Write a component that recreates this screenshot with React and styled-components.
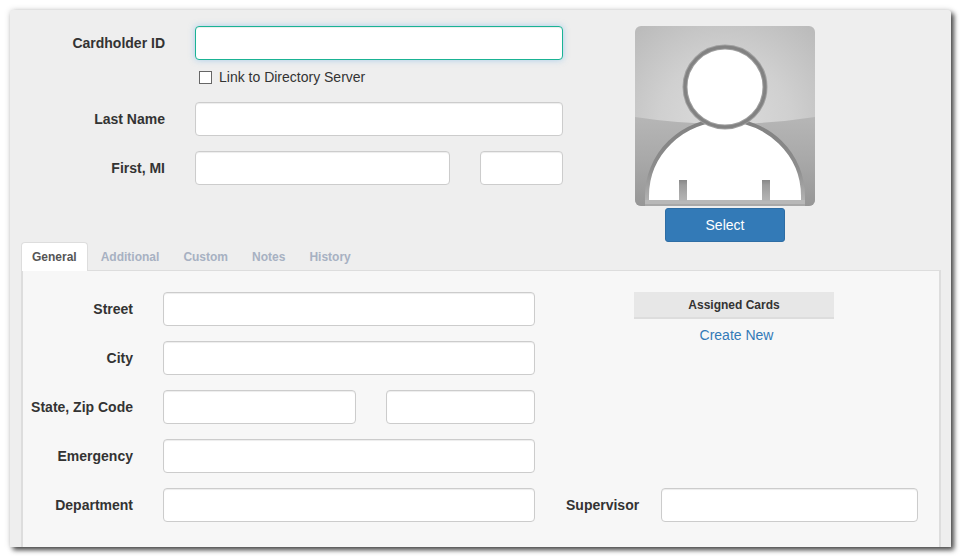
import React, { useState } from 'react';
import styled, { createGlobalStyle } from 'styled-components';

const GlobalStyle = createGlobalStyle`
  * {
    box-sizing: border-box;
  }

  body {
    margin: 0;
    background: #fff;
    color: #333;
    font-family: "Liberation Sans", Arial, sans-serif;
    font-size: 14px;
    line-height: 20px;
  }
`;

const Panel = styled.form`
  margin: 10px 11px 11px 10px;
  padding: 16px 10px 0 11px;
  background: #eee;
  border-radius: 3px 3px 0 0;
  box-shadow: 3px 3px 5px rgba(0, 0, 0, 0.7), 0 0 6px rgba(0, 0, 0, 0.15);
`;

const Summary = styled.section`
  display: grid;
  grid-template-columns: minmax(0, 1fr) 180px;
  column-gap: 72px;
  padding-right: 126px;
`;

const Fields = styled.div`
  display: flex;
  flex-direction: column;
  gap: 15px;
`;

const Row = styled.div`
  display: grid;
  grid-template-columns: ${(props) => props.$labelWidth} minmax(0, 1fr);
  column-gap: ${(props) => props.$gap || '30px'};
  align-items: center;
`;

const Label = styled.label`
  font-weight: bold;
  text-align: right;
  white-space: nowrap;
`;

const Split = styled.div`
  display: grid;
  grid-template-columns: ${(props) => props.$columns};
  column-gap: 30px;
`;

const TextInput = styled.input`
  width: 100%;
  height: 34px;
  padding: 6px 12px;
  border: 1px solid ${(props) => (props.$active ? '#1ab394' : '#ccc')};
  border-radius: 4px;
  background: #fff;
  box-shadow: inset 0 1px 1px rgba(0, 0, 0, 0.075)${(props) => (props.$active ? ', 0 0 6px rgba(102, 175, 233, 0.5)' : '')};
  color: #555;
  font: inherit;
  outline: none;
`;

const CheckRow = styled.div`
  display: flex;
  align-items: center;
  gap: 7px;
  margin: -8px 0 0 178px;
`;

const Checkbox = styled.input`
  appearance: none;
  width: 13px;
  height: 13px;
  margin: 0;
  border: 1px solid #666;
  background: ${(props) => (props.checked ? '#1ab394' : '#fff')};
`;

const Photo = styled.div`
  display: flex;
  flex-direction: column;
  align-items: center;
  gap: 2px;
`;

const Avatar = styled.svg`
  display: block;
  width: 180px;
  height: 180px;
  border-radius: 6px;
`;

const SelectButton = styled.button`
  width: 120px;
  height: 34px;
  border: 1px solid #2e6da4;
  border-radius: 3px;
  background: #337ab7;
  color: #fff;
  font: inherit;
  cursor: pointer;
`;

const TabList = styled.div`
  display: flex;
  gap: 2px;
  border-bottom: 1px solid #ddd;
`;

const Tab = styled.button`
  height: 29px;
  margin-bottom: -1px;
  padding: 0 10px;
  border: 1px solid ${(props) => (props.$active ? '#ddd' : 'transparent')};
  border-bottom: 0;
  border-radius: 4px 4px 0 0;
  background: ${(props) => (props.$active ? '#fff' : 'transparent')};
  color: ${(props) => (props.$active ? '#555' : '#a7b1c2')};
  font: bold 12px "Liberation Sans", Arial, sans-serif;
  cursor: pointer;
`;

const TabPane = styled.section`
  display: grid;
  grid-template-columns: minmax(0, 512fr) minmax(0, 352fr);
  column-gap: 31px;
  padding: 21px 21px 25px 0;
  border: solid #ddd;
  border-width: 0 2px;
  background: #f7f7f7;
`;

const SideColumn = styled.div`
  display: flex;
  flex-direction: column;
  justify-content: space-between;
`;

const Cards = styled.div`
  display: flex;
  flex-direction: column;
  align-items: center;
  gap: 6px;
  padding-right: 16px;
`;

const CardsHeading = styled.h2`
  width: 200px;
  margin: 0;
  padding: 5px 0 4px;
  border-bottom: 2px solid #ddd;
  background: #e7e7e7;
  font-size: 12px;
  line-height: 16px;
  text-align: center;
`;

const CardLink = styled.a`
  padding-left: 5px;
  color: #337ab7;
  text-decoration: none;
`;

const tabs = ['General', 'Additional', 'Custom', 'Notes', 'History'];

const PersonPlaceholder = () => (
  <Avatar viewBox="0 0 180 180" role="img" aria-label="No photo">
    <defs>
      <radialGradient id="glow" gradientUnits="userSpaceOnUse" cx="90" cy="96" r="130">
        <stop offset="0" stopColor="#dcdcdc" />
        <stop offset="0.5" stopColor="#d0d0d0" />
        <stop offset="0.75" stopColor="#c5c5c5" />
        <stop offset="1" stopColor="#bababa" />
      </radialGradient>
      <linearGradient id="floor" x1="0" y1="0" x2="0" y2="1">
        <stop offset="0" stopColor="#b6b6b6" />
        <stop offset="0.5" stopColor="#a8a8a8" />
        <stop offset="1" stopColor="#969696" />
      </linearGradient>
      <linearGradient id="outline" gradientUnits="userSpaceOnUse" x1="0" y1="96" x2="0" y2="180">
        <stop offset="0" stopColor="#828282" />
        <stop offset="0.55" stopColor="#8c8c8c" />
        <stop offset="1" stopColor="#b8b8b8" />
      </linearGradient>
      <linearGradient id="arm" gradientUnits="userSpaceOnUse" x1="0" y1="154" x2="0" y2="174">
        <stop offset="0" stopColor="#888" />
        <stop offset="0.25" stopColor="#9c9c9c" />
        <stop offset="1" stopColor="#b4b4b4" />
      </linearGradient>
    </defs>
    <rect width="180" height="180" fill="url(#glow)" />
    <path d="M0 91 Q90 105 180 91 V180 H0 Z" fill="url(#floor)" />
    <path d="M10 180 V170 H170 V180 Z" fill="#b8b8b8" />
    <path
      d="M12 176 V170 A78 76 0 0 1 168 170 V176"
      fill="#fff"
      stroke="url(#outline)"
      strokeWidth="4"
    />
    <path d="M10 174 H170 V178 H10 Z" fill="#b8b8b8" />
    <path d="M10 178 H170 V180 H10 Z" fill="#a8a8a8" />
    <path d="M44 154 H52 V175 H44 Z M127 154 H135 V175 H127 Z" fill="url(#arm)" />
    <circle cx="90" cy="61" r="40" fill="#fff" stroke="#a0a0a0" strokeWidth="5" />
    <circle cx="90" cy="61" r="40" fill="none" stroke="#828282" strokeWidth="3" />
  </Avatar>
);

const Field = ({ id, label, labelWidth, gap, active }) => (
  <Row $labelWidth={labelWidth} $gap={gap}>
    <Label htmlFor={id}>{label}</Label>
    <TextInput id={id} type="text" $active={active} />
  </Row>
);

const App = () => {
  const [activeTab, setActiveTab] = useState('General');
  const [linked, setLinked] = useState(false);

  return (
    <>
      <GlobalStyle />
      <Panel onSubmit={(e) => e.preventDefault()}>
        <Summary>
          <Fields>
            <Field id="cardholderId" label="Cardholder ID" labelWidth="144px" active />
            <CheckRow>
              <Checkbox
                id="linkDirectory"
                type="checkbox"
                checked={linked}
                onChange={(e) => setLinked(e.target.checked)}
              />
              <label htmlFor="linkDirectory">Link to Directory Server</label>
            </CheckRow>
            <Field id="lastName" label="Last Name" labelWidth="144px" />
            <Row $labelWidth="144px">
              <Label htmlFor="firstName">First, MI</Label>
              <Split $columns="255fr 83fr">
                <TextInput id="firstName" type="text" />
                <TextInput id="middleInitial" type="text" aria-label="MI" />
              </Split>
            </Row>
          </Fields>
          <Photo>
            <PersonPlaceholder />
            <SelectButton type="button">Select</SelectButton>
          </Photo>
        </Summary>

        <TabList role="tablist">
          {tabs.map((tab) => (
            <Tab
              key={tab}
              type="button"
              role="tab"
              aria-selected={tab === activeTab}
              $active={tab === activeTab}
              onClick={() => setActiveTab(tab)}
            >
              {tab}
            </Tab>
          ))}
        </TabList>

        <TabPane role="tabpanel">
          <Fields>
            <Field id="street" label="Street" labelWidth="110px" />
            <Field id="city" label="City" labelWidth="110px" />
            <Row $labelWidth="110px">
              <Label htmlFor="state">State, Zip Code</Label>
              <Split $columns="193fr 149fr">
                <TextInput id="state" type="text" />
                <TextInput id="zipCode" type="text" aria-label="Zip Code" />
              </Split>
            </Row>
            <Field id="emergency" label="Emergency" labelWidth="110px" />
            <Field id="department" label="Department" labelWidth="110px" />
          </Fields>
          <SideColumn>
            <Cards>
              <CardsHeading>Assigned Cards</CardsHeading>
              <CardLink href="#create">Create New</CardLink>
            </Cards>
            <Field id="supervisor" label="Supervisor" labelWidth="72px" gap="23px" />
          </SideColumn>
        </TabPane>
      </Panel>
    </>
  );
};

export default App;
